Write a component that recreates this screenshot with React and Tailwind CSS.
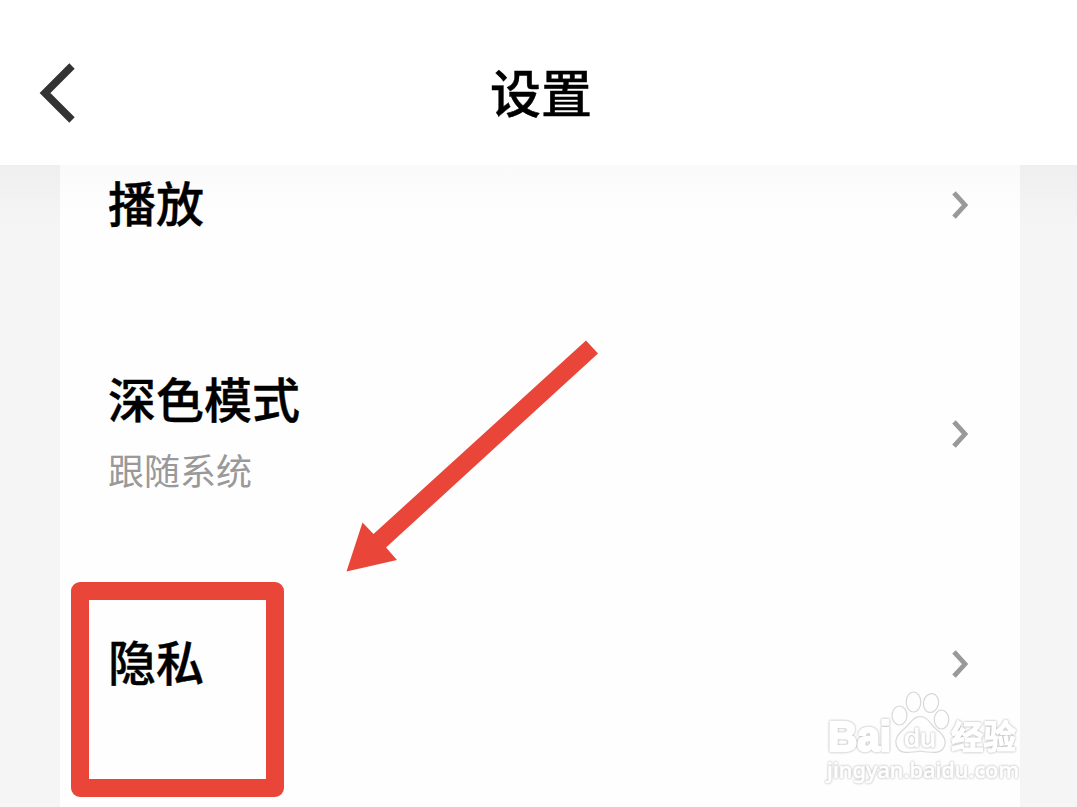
const rows = [
  { title: "播放" },
  { title: "深色模式", detail: "跟随系统" },
  { title: "隐私", highlighted: true },
];

function BackIcon() {
  return (
    <svg className="h-[60px] w-[37px]" viewBox="0 0 37 60" fill="none">
      <path d="M33 3 L6 30 L33 57" stroke="#333333" strokeWidth="7.6" />
    </svg>
  );
}

function ChevronIcon() {
  return (
    <svg className="h-[30px] w-[18px] shrink-0" viewBox="0 0 18 30" fill="none">
      <path d="M3 2.8 L14 15 L3 27.2" stroke="#999999" strokeWidth="4.8" />
    </svg>
  );
}

function Header() {
  return (
    <header className="flex h-[165px] shrink-0 items-center justify-between bg-white px-[39px] pt-[21px]">
      <button aria-label="返回" className="w-[37px]">
        <BackIcon />
      </button>
      <h1 className="-mt-[5px] pl-[5px] text-[51px] leading-[60px] font-medium text-black [-webkit-text-stroke:0.4px_black]">设置</h1>
      <span className="w-[37px]" />
    </header>
  );
}

function Row({ title, detail, highlighted }) {
  return (
    <li className="relative flex h-[229.5px] shrink-0 items-center justify-between pr-[51px] pl-[48px]">
      <div className={detail ? "flex flex-col gap-[12px] pb-[2px]" : "flex flex-col pb-[8px]"}>
        <span className="text-[48px] leading-[60px] font-medium text-black [-webkit-text-stroke:0.4px_black]">{title}</span>
        {detail && <span className="text-[36px] leading-[60px] text-[#999999]">{detail}</span>}
      </div>
      <ChevronIcon />
      {highlighted && (
        <span className="absolute top-[32.5px] left-[11px] h-[215px] w-[213px] rounded-[9px] border-[18px] border-[#e94538]" />
      )}
    </li>
  );
}

function Arrow() {
  return (
    <svg className="absolute top-[330px] left-[330px] h-[250px] w-[280px]" viewBox="0 0 280 250">
      <path d="M256 10.5 L268 23.5 L56 217.5 L67 230 L16.5 241.5 L32.5 192.5 L43.5 204 Z" fill="#e94538" />
    </svg>
  );
}

function Watermark() {
  return (
    <svg
      className="absolute top-[680px] left-[817px] h-[127px] w-[220px]"
      viewBox="0 0 220 127"
      fill="#ffffff"
      stroke="#ffffff"
      strokeLinejoin="round"
    >
      <g fill="none" stroke="#d8d8d8" strokeWidth="1.2">
        <ellipse cx="82.5" cy="35.5" rx="7.5" ry="9.5" />
        <ellipse cx="96.5" cy="22" rx="7.3" ry="10" />
        <ellipse cx="114" cy="23" rx="7.5" ry="9.5" transform="rotate(12 114 23)" />
        <ellipse cx="124.5" cy="39.5" rx="7.3" ry="9.5" />
        <path d="M103 36.5 C111 36.5 113 44 119 49 C127 55 130 61 127 67 C124 74 115 73 103 71 C92 73 83 74 80 67 C77 60 80 55 87 49 C93 44 96 36.5 103 36.5 Z" />
      </g>
      <g className="[filter:drop-shadow(0_0_0.8px_#a6a6a6)]">
        <text x="11" y="70.5" fontSize="42" strokeWidth="2.6" textLength="63" lengthAdjust="spacingAndGlyphs" className="font-['Liberation_Sans',sans-serif] font-bold">Bai</text>
        <text x="87" y="66.5" fontSize="26" strokeWidth="0.8" textLength="32" lengthAdjust="spacingAndGlyphs" className="font-['Liberation_Sans',sans-serif]">du</text>
        <text x="134" y="69" fontSize="32.5" strokeWidth="1.2" className="font-['Noto_Sans_CJK_SC',sans-serif] font-bold">经验</text>
        <text x="10" y="97.5" fontSize="22" strokeWidth="0.6" textLength="192" lengthAdjust="spacingAndGlyphs" className="font-['Noto_Sans',sans-serif] font-medium">jingyan.baidu.com</text>
      </g>
    </svg>
  );
}

export default function App() {
  return (
    <div className="relative flex h-[807px] w-[1077px] flex-col overflow-hidden bg-[#f5f5f5] font-['Noto_Sans_CJK_SC',sans-serif]">
      <Header />
      <main className="flex min-h-0 flex-1 justify-center overflow-hidden bg-linear-to-b from-[#efefef] to-[#f5f5f5] to-[60px] pr-[57px] pl-[60px]">
        <ul className="flex flex-1 flex-col bg-linear-to-b from-[#fafafa] to-[#fefefe] to-[50px]">
          <div className="-mt-[75px]" />
          {rows.map((row) => (
            <Row key={row.title} {...row} />
          ))}
        </ul>
      </main>
      <Arrow />
      <Watermark />
    </div>
  );
}
